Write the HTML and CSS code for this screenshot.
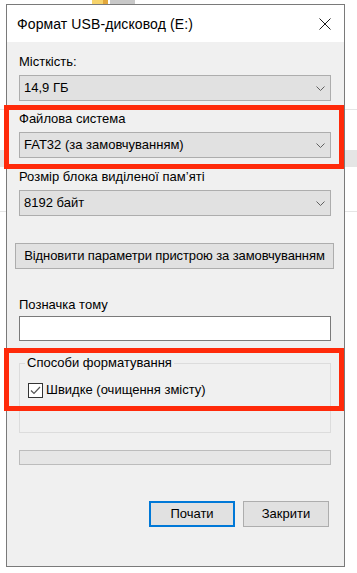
FILE: index.html
```html
<!DOCTYPE html>
<html lang="uk">
<head>
<meta charset="UTF-8">
<title>Формат USB-дисковод (E:)</title>
<link rel="stylesheet" href="styles.css">
</head>
<body>
	<div class="window">
		<div class="titlebar">
			<span class="title">Формат USB-дисковод (E:)</span>
			<svg class="close" width="12" height="12" viewBox="0 0 12 12">
				<path d="M0.5 0.5 L11.5 11.5 M11.5 0.5 L0.5 11.5" stroke="#1a1a1a" stroke-width="1" fill="none"/>
			</svg>
		</div>

		<div class="content">
			<div class="label">Місткість:</div>
			<div class="select">
				<span>14,9 ГБ</span>
				<svg class="chev" width="9" height="5" viewBox="0 0 9 5"><polyline points="0.5,0.5 4.5,4.5 8.5,0.5" fill="none" stroke="#606060"/></svg>
			</div>

			<div class="label label-next">Файлова система</div>
			<div class="select select-fs">
				<span>FAT32 (за замовчуванням)</span>
				<svg class="chev" width="9" height="5" viewBox="0 0 9 5"><polyline points="0.5,0.5 4.5,4.5 8.5,0.5" fill="none" stroke="#606060"/></svg>
			</div>

			<div class="label label-block">Розмір блока виділеної пам’яті</div>
			<div class="select select-block">
				<span>8192 байт</span>
				<svg class="chev" width="9" height="5" viewBox="0 0 9 5"><polyline points="0.5,0.5 4.5,4.5 8.5,0.5" fill="none" stroke="#606060"/></svg>
			</div>

			<div class="btn btn-restore">Відновити параметри пристрою за замовчуванням</div>

			<div class="label label-volume">Позначка тому</div>
			<div class="textbox"></div>

			<fieldset class="group">
				<legend>Способи форматування</legend>
				<div class="check-row">
					<span class="checkbox">
						<svg width="13" height="13" viewBox="0 0 13 13"><polyline points="2,6.5 5,9.5 11,3" fill="none" stroke="#555" stroke-width="1.2"/></svg>
					</span>
					<span>Швидке (очищення змісту)</span>
				</div>
			</fieldset>

			<div class="progress"></div>

			<div class="actions">
				<div class="btn btn-primary">Почати</div>
				<div class="btn">Закрити</div>
			</div>
		</div>

		<!-- червоні рамки поверх діалогу -->
		<div class="mark mark-fs"></div>
		<div class="mark mark-quick"></div>
	</div>
</body>
</html>
```

FILE: styles.css
```css
* { padding: 0; margin: 0; box-sizing: border-box; }
html, body { height: 100%; overflow: hidden; }
body {
	font-family: "Liberation Sans", Arial, sans-serif;
	font-size: 13px;
	color: #000;
	padding: 4px 0 0 6px;
	background:
		linear-gradient(#f6d36b, #f6d36b) 92px 0 / 11px 4px no-repeat,
		linear-gradient(#e2a73c, #e2a73c) 103px 0 / 5px 4px no-repeat,
		linear-gradient(#c8c8c8, #c8c8c8) 110px 0 / 25px 4px no-repeat,
		linear-gradient(#e5e5e5, #e5e5e5) 0 109px / 100% 1px no-repeat,
		linear-gradient(#e5e5e5, #e5e5e5) 0 150px / 100% 17px no-repeat,
		linear-gradient(#e5e5e5, #e5e5e5) 0 211px / 100% 1px no-repeat,
		#fff;
}

.window { position: relative; width: 339px; height: 563px; border: 1px solid #7a7a7a; background: #f0f0f0; }

.titlebar { height: 37px; background: #fff; display: flex; align-items: center; justify-content: space-between; padding: 0 13px 0 10px; }
.title { font-size: 14px; line-height: 18px; letter-spacing: 0.1px; }
.close { display: block; }

.content { display: flex; flex-direction: column; padding: 12px 13px 0 12px; }
.label { line-height: 16px; }
.label-next { margin-top: 10px; }
.label-block { margin-top: 11px; }
.label-volume { margin-top: 28px; }

.select { height: 26px; margin-top: 5px; border: 1px solid #adadad; background: #e1e1e1; display: flex; align-items: center; justify-content: space-between; padding: 0 5px 0 4px; line-height: 16px; }
.select:first-of-type { margin-top: 6px; }
.chev { display: block; }

.btn { height: 26px; border: 1px solid #adadad; background: #e1e1e1; display: flex; align-items: center; justify-content: center; line-height: 16px; }
.btn-restore { margin: 27px -3px 0 -4px; letter-spacing: -0.1px; }

.textbox { height: 25px; margin-top: 3px; border: 1px solid #7a7a7a; background: #fff; }

.group { height: 78px; margin-top: 14px; border: 1px solid #dcdcdc; padding: 0 0 0 8px; }
.group legend { line-height: 16px; padding: 0 2px; margin-left: -3px; }
.check-row { display: flex; align-items: center; gap: 3px; line-height: 16px; margin-top: 11px; }
.checkbox { width: 15px; height: 15px; border: 1px solid #333; background: #fff; display: flex; align-items: center; justify-content: center; }
.checkbox svg { display: block; }

.progress { height: 15px; margin-top: 17px; border: 1px solid #bcbcbc; background: #e6e6e6; }

.actions { display: flex; justify-content: flex-end; gap: 8px; margin-top: 36px; padding-right: 2px; }
.actions .btn { width: 86px; }
.btn-primary { border: 2px solid #0078d7; }

.mark { position: absolute; left: -3px; width: 340px; border: 5px solid #ff2a0a; }
.mark-fs { top: 100px; height: 64px; }
.mark-quick { top: 343px; height: 63px; }
```
